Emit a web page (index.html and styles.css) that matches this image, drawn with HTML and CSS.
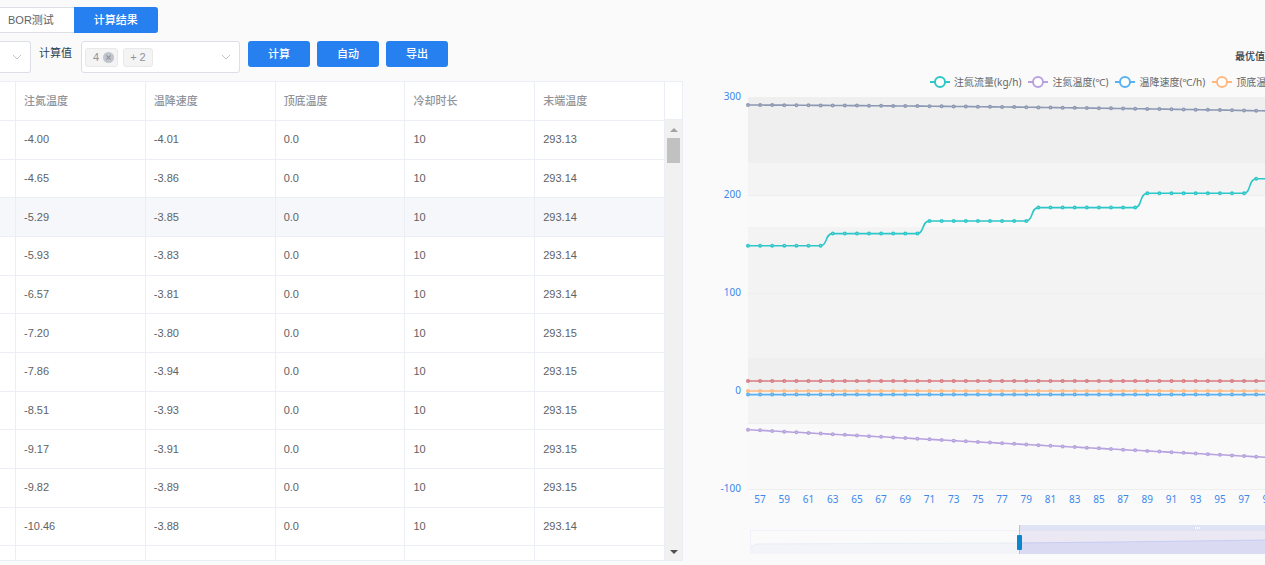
FILE: index.html
```html
<!DOCTYPE html>
<html lang="zh-CN">
<head>
<meta charset="utf-8">
<title>计算结果</title>
<link rel="stylesheet" href="styles.css">
</head>
<body>
<main class="page">
  <section class="panel">
    <nav class="tabs">
      <button class="tab" type="button">BOR测试</button>
      <button class="tab tab-active" type="button">计算结果</button>
    </nav>
    <form class="filters">
      <div class="select select-cut">
        <select class="select-control" aria-label="类型"><option></option></select>
        <svg class="chevron" viewBox="0 0 10 6"><path d="M1 1l4 4 4-4"/></svg>
      </div>
      <label class="filter-label" for="metric">计算值</label>
      <div class="select select-multi">
        <select class="select-control" id="metric"><option></option></select>
        <div class="tags">
          <span class="tag">4<button class="tag-close" type="button" aria-label="移除"><svg viewBox="0 0 10 10"><path d="M3 3l4 4M7 3l-4 4"/></svg></button></span>
          <span class="tag">+ 2</span>
        </div>
        <svg class="chevron" viewBox="0 0 10 6"><path d="M1 1l4 4 4-4"/></svg>
      </div>
      <div class="actions">
        <button class="action" type="button">计算</button>
        <button class="action" type="button">自动</button>
        <button class="action" type="button">导出</button>
      </div>
    </form>
    <div class="grid">
      <div class="grid-view">
        <table class="table">
          <thead>
            <tr><th class="lead"></th><th>注氮温度</th><th>温降速度</th><th>顶底温度</th><th>冷却时长</th><th>末端温度</th></tr>
          </thead>
          <tbody>
            <tr><td></td><td>-4.00</td><td>-4.01</td><td>0.0</td><td>10</td><td>293.13</td></tr>
            <tr><td></td><td>-4.65</td><td>-3.86</td><td>0.0</td><td>10</td><td>293.14</td></tr>
            <tr class="hovered"><td></td><td>-5.29</td><td>-3.85</td><td>0.0</td><td>10</td><td>293.14</td></tr>
            <tr><td></td><td>-5.93</td><td>-3.83</td><td>0.0</td><td>10</td><td>293.14</td></tr>
            <tr><td></td><td>-6.57</td><td>-3.81</td><td>0.0</td><td>10</td><td>293.14</td></tr>
            <tr><td></td><td>-7.20</td><td>-3.80</td><td>0.0</td><td>10</td><td>293.15</td></tr>
            <tr><td></td><td>-7.86</td><td>-3.94</td><td>0.0</td><td>10</td><td>293.15</td></tr>
            <tr><td></td><td>-8.51</td><td>-3.93</td><td>0.0</td><td>10</td><td>293.15</td></tr>
            <tr><td></td><td>-9.17</td><td>-3.91</td><td>0.0</td><td>10</td><td>293.15</td></tr>
            <tr><td></td><td>-9.82</td><td>-3.89</td><td>0.0</td><td>10</td><td>293.15</td></tr>
            <tr><td></td><td>-10.46</td><td>-3.88</td><td>0.0</td><td>10</td><td>293.14</td></tr>
            <tr><td></td><td></td><td></td><td></td><td></td><td></td></tr>
          </tbody>
        </table>
      </div>
      <div class="gutter">
        <div class="gutter-head"></div>
        <div class="track">
          <svg class="arrow arrow-up" viewBox="0 0 8 4"><path d="M0 4l4-4 4 4z"/></svg>
          <div class="thumb"></div>
          <svg class="arrow arrow-down" viewBox="0 0 8 4"><path d="M0 0h8l-4 4z"/></svg>
        </div>
      </div>
    </div>
  </section>
  <section class="chart">
    <h2 class="chart-title">最优值:</h2>
    <ul class="legend">
      <li class="legend-item teal"><svg class="mark" viewBox="0 0 20 12"><path d="M0 6h20"/><circle cx="10" cy="6" r="5"/></svg>注氮流量(kg/h)</li>
      <li class="legend-item purple"><svg class="mark" viewBox="0 0 20 12"><path d="M0 6h20"/><circle cx="10" cy="6" r="5"/></svg>注氮温度(℃)</li>
      <li class="legend-item blue"><svg class="mark" viewBox="0 0 20 12"><path d="M0 6h20"/><circle cx="10" cy="6" r="5"/></svg>温降速度(℃/h)</li>
      <li class="legend-item orange"><svg class="mark" viewBox="0 0 20 12"><path d="M0 6h20"/><circle cx="10" cy="6" r="5"/></svg>顶底温度(℃)</li>
    </ul>
    <svg class="plot" id="plot"></svg>
  </section>
</main>
<script src="chart.js"></script>
</body>
</html>
```

FILE: styles.css
```css
* {
  box-sizing: border-box;
}

body {
  margin: 0;
  background: #fafafa;
  color: #606266;
  font-family: "Liberation Sans", "Noto Sans CJK SC", sans-serif;
  font-size: 11px;
  overflow: hidden;
}

button,
select {
  font: inherit;
}

.page {
  display: flex;
}

.panel {
  flex: 0 0 54%;
  min-width: 0;
  padding-top: 7px;
}

.tabs {
  display: flex;
}

.tab {
  height: 26px;
  padding: 0 20px 2px 8px;
  border: 1px solid #dcdfe6;
  border-left: 0;
  border-right: 0;
  background: #fff;
  color: #606266;
}

.tab-active {
  border-color: #2680f0;
  border-radius: 0 3px 3px 0;
  background: #2680f0;
  color: #fff;
  font-weight: 500;
  padding: 0 20px 2px;
}

.filters {
  display: flex;
  align-items: flex-start;
  gap: 8px;
  margin-top: 8px;
}

.select {
  position: relative;
  height: 32px;
  border: 1px solid #dcdfe6;
  border-radius: 3px;
  background: #fff;
}

.select-cut {
  width: 31px;
  border-left: 0;
  border-radius: 0 3px 3px 0;
}

.select-multi {
  width: 159px;
}

.select-control {
  width: 100%;
  height: 100%;
  border: 0;
  background: transparent;
  appearance: none;
}

.chevron {
  position: absolute;
  right: 8px;
  top: 12px;
  width: 10px;
  height: 6px;
  fill: none;
  stroke: #c0c4cc;
  pointer-events: none;
}

.filter-label {
  width: 34px;
  line-height: 24px;
  color: #2c3e50;
  white-space: nowrap;
}

.tags {
  position: absolute;
  left: 3px;
  top: 6px;
  display: flex;
  gap: 5px;
}

.tag {
  display: flex;
  align-items: center;
  gap: 4px;
  height: 19px;
  padding: 0 3px 2px 7px;
  border: 1px solid #e9e9eb;
  border-radius: 3px;
  background: #f4f4f5;
  color: #909399;
}

.tag:last-child {
  padding: 0 6px 2px;
}

.tag-close {
  display: flex;
  width: 11px;
  height: 11px;
  margin-top: 2px;
  padding: 0;
  border: 0;
  border-radius: 50%;
  background: #c0c4cc;
}

.tag-close svg {
  width: 11px;
  height: 11px;
  stroke: #909399;
}

.actions {
  display: flex;
  gap: 7px;
}

.action {
  height: 26px;
  padding: 0 20px 2px;
  border: 0;
  border-radius: 3px;
  background: #2680f0;
  color: #fff;
  font-weight: 500;
}

.grid {
  display: flex;
  height: 480px;
  margin-top: 8px;
  border: 1px solid #ebeef5;
  border-left: 0;
  background: #fff;
}

.grid-view {
  flex: 1;
  overflow: hidden;
}

.table {
  width: 100%;
  height: 503px;
  table-layout: fixed;
  border-spacing: 0;
}

.table th,
.table td {
  padding: 0 8px;
  border-right: 1px solid #ebeef5;
  border-bottom: 1px solid #ebeef5;
  text-align: left;
}

.table th {
  height: 39px;
  padding-bottom: 2px;
  color: #909399;
  font-weight: 500;
}

.table td {
  height: 38px;
  padding-bottom: 1px;
}

.table .lead {
  width: 16px;
  padding: 0;
}

.hovered {
  background: #f5f7fa;
}

.gutter {
  display: flex;
  flex-direction: column;
  width: 17px;
}

.gutter-head {
  height: 38px;
  border-bottom: 1px solid #ebeef5;
}

.track {
  display: flex;
  flex: 1;
  flex-direction: column;
  align-items: center;
  padding: 8px 0 6px;
  background: #f1f1f1;
}

.arrow {
  width: 8px;
  height: 4px;
}

.arrow-up {
  fill: #a3a3a3;
}

.arrow-down {
  margin-top: auto;
  fill: #505050;
}

.thumb {
  width: 13px;
  height: 25px;
  margin-top: 6px;
  background: #c1c1c1;
}

.chart {
  flex: 1;
  min-width: 0;
  padding-top: 48px;
  font-family: "Noto Sans", "Noto Sans CJK SC", sans-serif;
  font-size: 10px;
}

.chart-title {
  margin: 0 0 0 552px;
  color: #2c3e50;
  font-size: 10px;
  font-weight: 500;
  line-height: 16px;
  white-space: nowrap;
}

.legend {
  display: flex;
  gap: 7px;
  margin: 10px 0 0;
  padding: 0 0 0 247px;
  line-height: 16px;
  list-style: none;
  white-space: nowrap;
}

.legend-item {
  display: flex;
  flex: none;
  align-items: center;
  gap: 4px;
  color: #666;
}

.mark {
  width: 20px;
  height: 12px;
  fill: #fff;
  stroke: currentColor;
  stroke-width: 2;
}

.teal .mark { color: #2ec7c9; }
.purple .mark { color: #b6a2de; }
.blue .mark { color: #5ab1ef; }
.orange .mark { color: #ffb980; }

.plot {
  display: block;
  width: 100%;
  height: 475px;
}

.axis-label {
  fill: #3a88ec;
}

.series {
  fill: none;
  stroke-width: 1.6;
}

.dot {
  fill: #fff;
  stroke-width: 1.6;
}
```

FILE: chart.js
```javascript
const plot = document.getElementById('plot');
const LEFT = 65;
const TOP = 7;
const UNIT = 98;
const STEP = 12.1;
const COUNT = 46;
const WIDTH = 1200;

function add(name, attrs, text) {
  const el = document.createElementNS('http://www.w3.org/2000/svg', name);
  for (const key in attrs) el.setAttribute(key, attrs[key]);
  if (text !== undefined) el.textContent = text;
  plot.appendChild(el);
  return el;
}

function rect(x, y, width, height, fill) {
  add('rect', { x, y, width, height, fill });
}

// Background bands: offset from the top of the plot, height, fill
[
  [0, 66, '#efefef'],
  [66, 32, '#f4f4f4'],
  [98, 32, '#f9f9f9'],
  [130, 131, '#f3f3f3'],
  [261, 33, '#efefef'],
  [294, 32, '#f3f3f3'],
  [326, 66, '#f9f9f9']
].forEach(([y, h, fill]) => rect(LEFT, TOP + y, WIDTH, h, fill));

[98, 196, 326, 392].forEach(y => rect(LEFT, TOP + y, WIDTH, 1, '#eeeeee'));

[300, 200, 100, 0, -100].forEach((value, i) => {
  add('text', { x: LEFT - 7, y: TOP + i * UNIT + 3, 'text-anchor': 'end', class: 'axis-label' }, value);
});

for (let i = 1; i < COUNT; i += 2) {
  add('text', { x: LEFT + i * STEP, y: 413, 'text-anchor': 'middle', class: 'axis-label' }, 56 + i);
}

function series(color, level) {
  const points = [];
  for (let i = 0; i < COUNT; i++) points.push([LEFT + i * STEP, TOP + level(i)]);
  let d = 'M' + points[0];
  for (let i = 1; i < COUNT; i++) {
    const [x0, y0] = points[i - 1];
    const [x1, y1] = points[i];
    d += `C${x0 + 7},${y0} ${x1 - 8},${y1} ${x1},${y1}`;
  }
  add('path', { d, stroke: color, class: 'series' });
  points.forEach(([cx, cy]) => add('circle', { cx, cy, r: 1.2, stroke: color, class: 'dot' }));
}

const steps = [[42, 81.7], [33, 96.3], [24, 110.6], [15, 124], [7, 136.6], [0, 148.7]];

series('#2ec7c9', i => steps.find(s => i >= s[0])[1]);
series('#b6a2de', i => 332.7 + i * 0.643);
series('#5ab1ef', () => 297.6);
series('#ffb980', () => 294);
series('#d87a80', () => 284);
series('#8d98b3', i => 8 + i * 0.051 + i * i * 0.00202);

// Range slider
const SLIDER = 68;
const HANDLE = 336;
add('rect', { x: SLIDER - 0.5, y: 440.5, width: WIDTH, height: 23, fill: 'none', stroke: '#f0f1fa' });
add('path', { d: `M${SLIDER} 457l5-3L${HANDLE} 453V464H${SLIDER}z`, fill: '#f2f4f9' });
add('path', { d: `M${SLIDER} 457l5-3L${HANDLE} 453`, fill: 'none', stroke: '#e8edf5' });
rect(HANDLE, 435, WIDTH, 6, '#dfe3f3');
rect(HANDLE, 441, WIDTH, 23, '#ebe8f3');
add('path', { d: `M${HANDLE} 453l100-1 150-2h200v14H${HANDLE}z`, fill: '#dbdaf3' });
add('path', { d: `M${HANDLE} 453l100-1 150-2h200`, fill: 'none', stroke: '#c5cdf2' });
[0, 2, 4].forEach(dx => rect(512 + dx, 437, 1, 2, '#ffffff'));
rect(HANDLE, 435, 1, 29, '#b5bfdc');
add('rect', { x: HANDLE - 2, y: 445, width: 5, height: 15, rx: 1, fill: '#0a86cc' });
```
